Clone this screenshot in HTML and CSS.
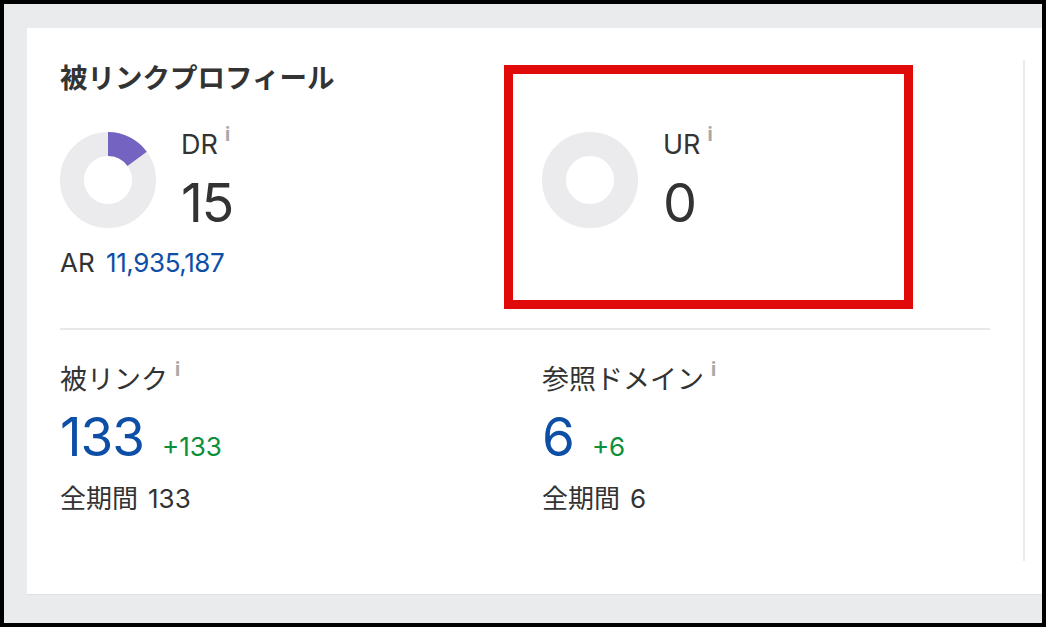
FILE: index.html
```html
<!DOCTYPE html>
<html lang="ja">
<head>
<meta charset="utf-8">
<title>被リンクプロフィール</title>
<link rel="stylesheet" href="styles.css">
</head>
<body>
<div class="frame">
  <div class="card">
    <section class="panel">
      <h2 class="title">被リンクプロフィール</h2>
      <div class="grid">
        <div class="metric">
          <div class="gauge-row">
            <svg class="donut" width="96" height="96" viewBox="0 0 96 96">
              <circle cx="48" cy="48" r="36" fill="none" stroke="#ebebed" stroke-width="24"/>
              <path d="M48 0 A48 48 0 0 1 86.83 19.79 L67.42 33.89 A24 24 0 0 0 48 24 Z" fill="#7563c1"/>
            </svg>
            <div class="gauge-text">
              <div class="label">DR<span class="info">i</span></div>
              <div class="big">15</div>
            </div>
          </div>
          <div class="ar">AR <span class="link">11,935,187</span></div>
        </div>
        <div class="metric">
          <div class="gauge-row">
            <svg class="donut" width="96" height="96" viewBox="0 0 96 96">
              <circle cx="48" cy="48" r="36" fill="none" stroke="#ebebed" stroke-width="24"/>
            </svg>
            <div class="gauge-text">
              <div class="label">UR<span class="info">i</span></div>
              <div class="big">0</div>
            </div>
          </div>
        </div>
      </div>
      <div class="rule"></div>
      <div class="grid">
        <div class="stat">
          <div class="label">被リンク<span class="info">i</span></div>
          <div class="value"><span class="num">133</span><span class="delta">+133</span></div>
          <div class="total">全期間<span class="total-num">133</span></div>
        </div>
        <div class="stat">
          <div class="label">参照ドメイン<span class="info">i</span></div>
          <div class="value"><span class="num">6</span><span class="delta">+6</span></div>
          <div class="total">全期間<span class="total-num">6</span></div>
        </div>
      </div>
    </section>
    <div class="sep"></div>
    <div class="highlight"></div>
  </div>
</div>
</body>
</html>
```

FILE: styles.css
```css
html, body {
  margin: 0;
  padding: 0;
  background: #000;
}
body {
  font-family: Inter, "Noto Sans CJK JP", sans-serif;
  color: #333;
}
.frame {
  margin: 4px;
  width: 1038px;
  height: 619px;
  background: #eaebed;
  padding: 24px 0 0 23px;
  box-sizing: border-box;
  overflow: hidden;
}
.card {
  position: relative;
  background: #fff;
  height: 567px;
  border-bottom: 1px solid #dfe0e2;
  box-sizing: border-box;
  display: flex;
  align-items: flex-start;
}
.panel {
  width: 963px;
  padding: 35px 0 0 33px;
  box-sizing: border-box;
}
.title {
  margin: 0;
  font-size: 27.5px;
  line-height: 27px;
  font-weight: 700;
  font-family: "Noto Sans CJK JP", sans-serif;
  color: #333;
}
.grid {
  display: grid;
  grid-template-columns: 448px 448px;
  column-gap: 34px;
}
.metric {
  margin-top: 42px;
}
.gauge-row {
  display: flex;
  align-items: flex-start;
  gap: 25px;
}
.donut {
  display: block;
  flex: none;
}
.gauge-text {
  margin-top: -3px;
}
.label {
  font-size: 27px;
  line-height: 32px;
  white-space: nowrap;
}
.info {
  display: inline-block;
  vertical-align: top;
  margin-left: 7px;
  font-size: 19px;
  line-height: 19px;
  font-weight: 700;
  color: #a8a8a8;
  position: relative;
  top: -4px;
}
.big {
  margin-top: 15px;
  font-size: 54px;
  line-height: 54px;
  letter-spacing: -1.5px;
  color: #333;
}
.ar {
  margin-top: 17px;
  font-size: 26px;
  line-height: 32px;
}
.link {
  margin-left: 4px;
  color: #0d4ea6;
  letter-spacing: -0.4px;
}
.rule {
  margin-top: 49px;
  height: 2px;
  background: #e8e8e8;
}
.stat {
  margin-top: 34px;
}
.value {
  margin-top: 14px;
  display: flex;
  align-items: baseline;
  white-space: nowrap;
}
.num {
  font-size: 53px;
  line-height: 54px;
  letter-spacing: -1px;
  color: #0d4ea6;
}
.delta {
  margin-left: 18px;
  font-size: 26px;
  line-height: 26px;
  color: #0b8f3c;
}
.total {
  margin-top: 19px;
  font-size: 26px;
  line-height: 32px;
}
.total-num {
  margin-left: 10px;
}
.sep {
  flex: none;
  width: 2px;
  height: 501px;
  margin: 32px 0 0 33px;
  background: #ebebeb;
}
.highlight {
  position: absolute;
  left: 477px;
  top: 37px;
  width: 409px;
  height: 244px;
  border: 9.5px solid #e10a0a;
  box-sizing: border-box;
}
```
